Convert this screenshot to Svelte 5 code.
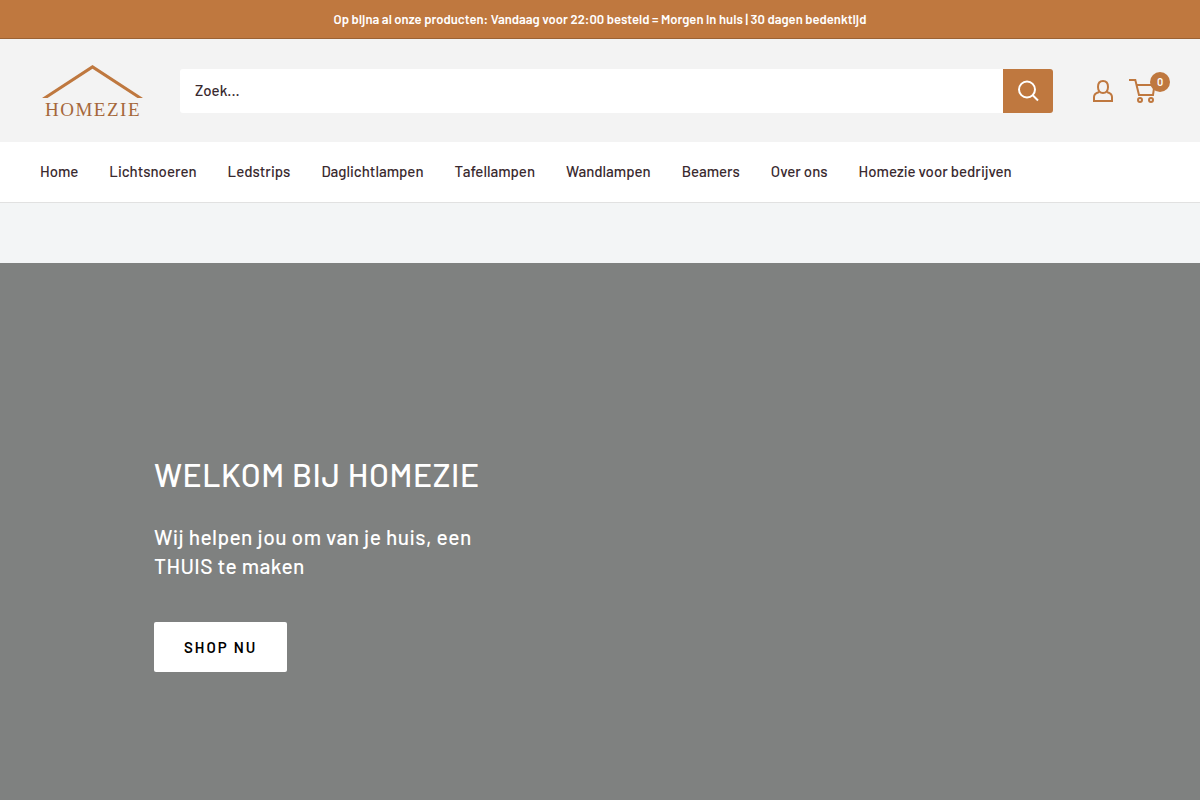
<script>
	const links = [
		'Home',
		'Lichtsnoeren',
		'Ledstrips',
		'Daglichtlampen',
		'Tafellampen',
		'Wandlampen',
		'Beamers',
		'Over ons',
		'Homezie voor bedrijven'
	];

	let query = $state('');
	let cartCount = $state(0);
</script>

<div class="page">
	<div class="announcement">
		<p>Op bijna al onze producten: Vandaag voor 22:00 besteld = Morgen in huis | 30 dagen bedenktijd</p>
	</div>

	<header class="header">
		<a class="logo" href="/" aria-label="Homezie">
			<svg width="106" height="60" viewBox="0 0 106 60">
				<path d="M2 37 L52.500 4 L103 37 L97.500 37 L52.500 7.800 L7.500 37 Z" fill="#bf783f" />
				<text x="53" y="55" text-anchor="middle">HOMEZIE</text>
			</svg>
		</a>

		<form class="search" onsubmit={(e) => e.preventDefault()}>
			<input type="text" aria-label="Zoek" placeholder="Zoek..." bind:value={query} />
			<button type="submit" aria-label="Zoeken">
				<svg width="22" height="22" viewBox="0 0 22 22" fill="none" stroke="currentColor" stroke-width="2">
					<circle cx="10" cy="9.500" r="8" />
					<path d="M15.500 15 L21 20.500" />
				</svg>
			</button>
		</form>

		<div class="actions">
			<a href="/account" aria-label="Mijn account">
				<svg width="20" height="22" viewBox="0 0 20 22" fill="none" stroke="currentColor" stroke-width="2">
					<path d="M10 13 C7 13 5 10.500 5 7 C5 3 6.800 1 10 1 C13.200 1 15 3 15 7 C15 10.500 13 13 10 13 Z" />
					<path d="M6.300 12 C2.500 13 1 14.500 1 17 V21 H19 V17 C19 14.500 17.500 13 13.700 12" />
				</svg>
			</a>
			<a class="cart" href="/cart" aria-label="Winkelwagen">
				<svg width="27" height="24" viewBox="0 0 27 24" fill="none" stroke="currentColor" stroke-width="2">
					<path d="M0 1 H6.300 L10 16 H24 L25.500 6 H8" />
					<circle cx="11" cy="21" r="2" />
					<circle cx="22" cy="21" r="2" />
				</svg>
				<span class="count">{cartCount}</span>
			</a>
		</div>
	</header>

	<nav class="nav">
		{#each links as link}
			<a href="/">{link}</a>
		{/each}
	</nav>

	<main>
		<section class="hero">
			<div class="hero-content">
				<h1>WELKOM BIJ HOMEZIE</h1>
				<p>Wij helpen jou om van je huis, een THUIS te maken</p>
				<a class="button" href="/">SHOP NU</a>
			</div>
		</section>
	</main>
</div>

<style>
	:global(body) {
		margin: 0;
	}

	.page {
		display: flex;
		flex-direction: column;
		min-height: 100vh;
		font-family: Barlow, Roboto, 'Liberation Sans', sans-serif;
		font-size: 15px;
		font-weight: 500;
		color: #3a2a2f;
		background: #f3f5f6;
	}

	a {
		color: inherit;
		text-decoration: none;
	}

	svg {
		display: block;
	}

	.announcement {
		padding: 10px 40px;
		background: #bf783f;
		border-bottom: 1px solid #9b6234;
		color: #fff;
		text-align: center;
	}

	.announcement p {
		margin: 0;
		font-size: 13px;
		font-weight: 600;
		line-height: 18px;
	}

	.header {
		display: flex;
		align-items: center;
		padding: 22px 40px 21px;
		background: #f3f3f3;
	}

	.logo {
		margin-right: 34px;
	}

	.logo text {
		font-family: 'Liberation Serif', serif;
		font-size: 19px;
		font-weight: 400;
		letter-spacing: 0.08em;
		fill: #a5673a;
	}

	.search {
		display: flex;
		flex: 1;
		height: 44px;
	}

	.search input {
		flex: 1;
		min-width: 0;
		padding: 0 15px 2px;
		border: none;
		border-radius: 3px 0 0 3px;
		outline: none;
		background: #fff;
		color: inherit;
		font: inherit;
	}

	.search input::placeholder {
		color: inherit;
		opacity: 1;
	}

	.search button {
		display: flex;
		align-items: center;
		justify-content: center;
		width: 50px;
		padding: 0;
		border: none;
		border-radius: 0 3px 3px 0;
		background: #bf783f;
		color: #fff;
		cursor: pointer;
	}

	.actions {
		display: flex;
		align-items: center;
		gap: 16px;
		margin-left: 40px;
		margin-right: 4px;
		color: #bf783f;
	}

	.cart {
		position: relative;
	}

	.count {
		position: absolute;
		top: -7px;
		right: -14px;
		width: 20px;
		border-radius: 10px;
		background: #bf783f;
		color: #fff;
		font-size: 11px;
		font-weight: 600;
		line-height: 20px;
		text-align: center;
	}

	.nav {
		display: flex;
		flex-wrap: wrap;
		column-gap: 31px;
		padding: 17px 40px 19px;
		background: #fff;
		border-bottom: 1px solid #e1e1e1;
		line-height: 24px;
	}

	main {
		display: flex;
		flex: 1;
		padding-top: 60px;
	}

	.hero {
		flex: 1;
		padding: 187px 154px 128px;
		background: #7f8180;
		color: #fff;
	}

	.hero-content {
		max-width: 350px;
	}

	h1 {
		margin: 0 0 24px;
		font-size: 32px;
		font-weight: 500;
		line-height: 48px;
		letter-spacing: 0.02em;
		white-space: nowrap;
	}

	.hero p {
		margin: 0 0 42px;
		font-size: 21px;
		font-weight: 500;
		line-height: 29px;
		letter-spacing: 0.02em;
	}

	.button {
		display: inline-block;
		padding: 0 30px;
		border-radius: 2px;
		background: #fff;
		color: #000;
		font-weight: 600;
		line-height: 50px;
		letter-spacing: 2px;
	}
</style>
